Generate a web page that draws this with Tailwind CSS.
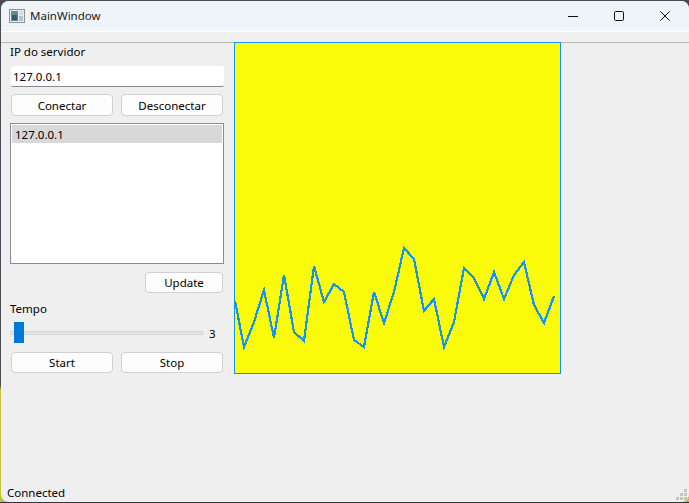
<!DOCTYPE html>
<html lang="pt">
<head>
<meta charset="utf-8">
<title>MainWindow</title>
<script src="https://cdn.jsdelivr.net/npm/@tailwindcss/browser@4"></script>
</head>
<body class="m-0 bg-[#2a2a33]">
<div class="w-[689px] h-[503px] overflow-hidden pt-px pb-px pl-px bg-[linear-gradient(to_bottom,#4a4a55_0,#4a4a55_385px,#c4c23c_390px,#c4c23c_502px,#34343c_502px)] font-['Noto_Sans','Open_Sans',sans-serif] text-[11.5px] leading-[16px] text-black">
  <div class="flex flex-col w-[688px] h-[501px] rounded-t-[8px] rounded-b-[8px] overflow-hidden bg-[#efefef]">
    <div class="flex items-center h-[30px] bg-[#eff4f9] shrink-0">
      <svg class="ml-[8px] w-[16px] h-[15px]" viewBox="0 0 16 15">
        <rect x="0.5" y="0.5" width="15" height="13" fill="#e8ecec" stroke="#8a9095"/>
        <rect x="2" y="2" width="7" height="10" fill="#5f8f8a"/>
        <rect x="3" y="6" width="5" height="5" fill="#2f5f6a"/>
        <rect x="10" y="2" width="4" height="4" fill="#d8dee0"/>
        <rect x="10" y="7" width="4" height="5" fill="#b4c2c4"/>
      </svg>
      <span class="ml-[5px] text-[#1a1a1a]">MainWindow</span>
      <div class="ml-auto mr-px flex items-center">
        <div class="w-[46px] h-[30px] flex items-center justify-center">
          <svg class="w-[10px] h-[10px]" viewBox="0 0 10 10"><path d="M0 5.5H10" stroke="#111" stroke-width="1"/></svg>
        </div>
        <div class="w-[46px] h-[30px] flex items-center justify-center">
          <svg class="w-[10px] h-[10px]" viewBox="0 0 10 10"><rect x="0.5" y="0.5" width="9" height="9" rx="1.2" fill="none" stroke="#111"/></svg>
        </div>
        <div class="w-[46px] h-[30px] flex items-center justify-center">
          <svg class="w-[10px] h-[10px]" viewBox="0 0 10 10"><path d="M0.3 0.3L9.7 9.7M9.7 0.3L0.3 9.7" stroke="#111" stroke-width="1"/></svg>
        </div>
      </div>
    </div>
    <div class="h-[11px] shrink-0 bg-[#f0f0f0] border-t border-t-white"></div>
    <div class="h-px shrink-0 bg-[#b5b5b5]"></div>
    <div class="flex flex-1 min-h-0 pl-[9px]">
      <div class="flex flex-col w-[214px] shrink-0">
        <div class="h-[15px] mt-px leading-[15px]">IP do servidor</div>
        <div class="mt-[7px] ml-px h-[21px] bg-white border-b border-b-[#8a8a8a] px-[2px] leading-[21px] rounded-[2px]">127.0.0.1</div>
        <div class="flex gap-[8px] mt-[7px] ml-px w-[212px]">
          <button class="w-[102px] h-[22px] pt-[2px] bg-[#fdfdfd] border border-[#d0d0d0] rounded-[4px]">Conectar</button>
          <button class="w-[102px] h-[22px] pt-[2px] bg-[#fdfdfd] border border-[#d0d0d0] rounded-[4px]">Desconectar</button>
        </div>
        <div class="mt-[7px] h-[141px] bg-white border border-[#8a8a92] p-px">
          <div class="h-[18px] bg-[#d8d8d8] px-[3px] leading-[20px]">127.0.0.1</div>
        </div>
        <div class="flex justify-end mt-[8px] w-[213px]">
          <button class="w-[78px] h-[21px] bg-[#fdfdfd] border border-[#d0d0d0] rounded-[4px]">Update</button>
        </div>
        <div class="mt-[8px] h-[15px] leading-[15px]">Tempo</div>
        <div class="flex items-center mt-[6px] h-[22px]">
          <div class="relative w-[193px] h-[4px] bg-[#e2e4e3] border border-[#d8d8d8]">
            <div class="absolute left-[3px] top-[-10px] w-[10px] h-[21px] bg-[#0078d7]"></div>
          </div>
          <span class="ml-[6px] mt-[2px]">3</span>
        </div>
        <div class="flex gap-[8px] mt-[8px] ml-px w-[212px]">
          <button class="w-[102px] h-[21px] bg-[#fdfdfd] border border-[#d0d0d0] rounded-[4px]">Start</button>
          <button class="w-[102px] h-[21px] bg-[#fdfdfd] border border-[#d0d0d0] rounded-[4px]">Stop</button>
        </div>
      </div>
      <div class="ml-[10px] w-[327px] h-[332px] shrink-0 -mt-px">
        <svg class="block" width="327" height="332" viewBox="234 42 327 332" shape-rendering="crispEdges">
          <rect x="234.5" y="42.5" width="326" height="331" fill="#fbfb0a" stroke="#0f96f5"/>
          <polyline fill="none" stroke="#0f96f5" stroke-width="2.2" points="235,301 244,347 254,322 264,290 274,338 284,275 294,332 304,341 314,266 324,302 334,284 344,292 354,340 364,347 374,292 384,323 394,292 404,248 414,259 424,311 434,299 444,347 454,322 464,268 474,278 484,299 494,272 504,299 514,275 524,262 534,305 544,323 554,296"/>
        </svg>
      </div>
    </div>
    <div class="relative h-[20px] shrink-0 pl-[6px] pt-px leading-[20px]">Connected
      <svg class="absolute right-[2px] bottom-[2px] w-[11px] h-[11px]" viewBox="0 0 11 11" fill="#c4c4c4">
        <rect x="8" y="0" width="3" height="3"/><rect x="4" y="4" width="3" height="3"/><rect x="8" y="4" width="3" height="3"/><rect x="0" y="8" width="3" height="3"/><rect x="4" y="8" width="3" height="3"/><rect x="8" y="8" width="3" height="3"/>
      </svg>
    </div>
  </div>
</div>
</body>
</html>
